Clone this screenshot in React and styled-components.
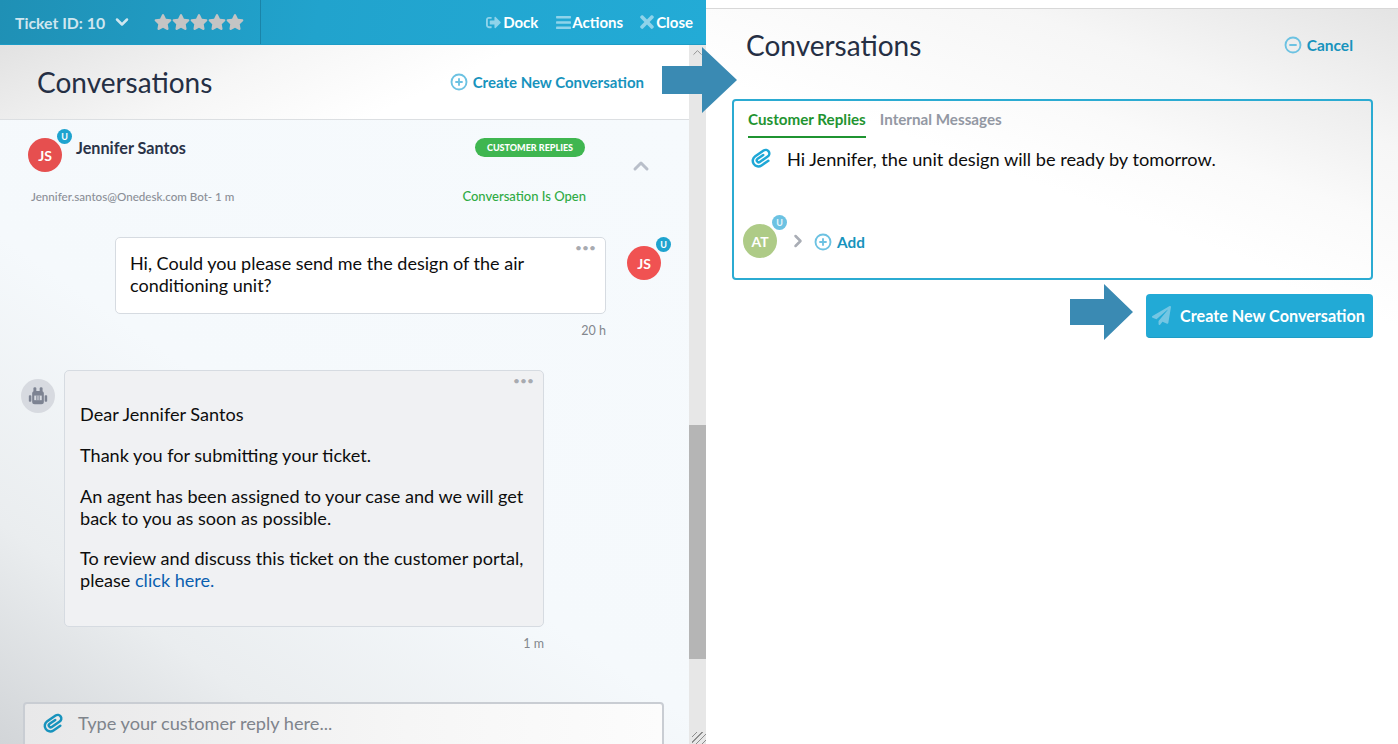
import React from 'react'
import styled, { createGlobalStyle } from 'styled-components'
import { ChevronDown, ChevronUp, ChevronRight, CirclePlus, CircleMinus } from 'lucide-react'
import { FaStar, FaBars, FaTimes, FaPaperPlane, FaSignOutAlt } from 'react-icons/fa'

const GlobalStyle = createGlobalStyle`
  html, body {
    margin: 0;
    padding: 0;
    background: #fff;
    font-family: Lato, "Liberation Sans", sans-serif;
  }
  * { box-sizing: border-box; }
`

function Clip({ size = 22 }) {
  return (
    <svg width={size} height={size} viewBox="0 0 24 24" fill="none" stroke="currentColor" strokeWidth="2.7" strokeLinecap="round">
      <path transform="rotate(-34 12 12)" d="M15 10H7.6a2.1 2.1 0 0 0 0 4.2H18a4 4 0 0 0 0-8H7a6.1 6.1 0 0 0 0 12.2H16" />
    </svg>
  )
}

function Robot() {
  return (
    <svg width="20" height="20" viewBox="0 0 24 24" fill="#7d8392">
      <rect x="6.5" y="1.5" width="3.5" height="6" rx="1.5" />
      <rect x="14" y="1.5" width="3.5" height="6" rx="1.5" />
      <rect x="5" y="6" width="14" height="16" rx="3" />
      <rect x="1" y="11" width="3" height="8" rx="1" />
      <rect x="20" y="11" width="3" height="8" rx="1" />
      <path d="M7.5 11.5h9v5.5h-9z" fill="#d7dae0" />
      <path d="M10 11.5h1.3V17H10zM12.7 11.5H14V17h-1.3z" />
    </svg>
  )
}

function Arrow({ shaft, headW, headH, shaftH }) {
  const w = shaft + headW
  const top = (headH - shaftH) / 2
  return (
    <svg width={w} height={headH} viewBox={`0 0 ${w} ${headH}`}>
      <path
        d={`M0 ${top}H${shaft}V0L${w} ${headH / 2}L${shaft} ${headH}V${top + shaftH}H0Z`}
        fill="#3a8ab3"
      />
    </svg>
  )
}

export default function App() {
  return (
    <>
      <GlobalStyle />
      <Page>
        <LeftPanel>
          <TopBar>
            <TicketCell>
              <TicketLabel>Ticket ID: 10</TicketLabel>
              <ChevronDown size={20} strokeWidth={3} color="#cfe6ef" />
              <Stars>
                {[0, 1, 2, 3, 4].map((i) => <FaStar key={i} size={18} />)}
              </Stars>
            </TicketCell>
            <BarActions>
              <BarAction><DockIcon size={15} /><span>Dock</span></BarAction>
              <BarAction><FaBars size={17} /><span>Actions</span></BarAction>
              <BarAction><CloseIcon size={20} /><span>Close</span></BarAction>
            </BarActions>
          </TopBar>

          <LeftBody>
            <Main>
              <LeftHead>
                <Title>Conversations</Title>
                <CreateLink>
                  <CirclePlus size={18} color="#6cc2e2" strokeWidth={2.5} />
                  <span>Create New Conversation</span>
                </CreateLink>
              </LeftHead>

              <Messages>
                <ThreadHead>
                  <NameRow>
                    <Avatar $bg="#e64f4f">
                      JS
                      <Badge>U</Badge>
                    </Avatar>
                    <Name>Jennifer Santos</Name>
                    <Pill>CUSTOMER REPLIES</Pill>
                    <Collapse><ChevronUp size={24} strokeWidth={3} /></Collapse>
                  </NameRow>
                  <MetaRow>
                    <Email>Jennifer.santos@Onedesk.com Bot- 1 m</Email>
                    <OpenState>Conversation Is Open</OpenState>
                  </MetaRow>
                </ThreadHead>

                <CustomerRow>
                  <Bubble>
                    <Dots>•••</Dots>
                    Hi, Could you please send me the design of the air conditioning unit?
                  </Bubble>
                  <SideAvatar $bg="#f05252">
                    JS
                    <Badge>U</Badge>
                  </SideAvatar>
                </CustomerRow>
                <CustomerTime>20 h</CustomerTime>

                <BotRow>
                  <BotAvatar><Robot /></BotAvatar>
                  <BotBubble>
                    <Dots>•••</Dots>
                    <Para>Dear Jennifer Santos</Para>
                    <Para>Thank you for submitting your ticket.</Para>
                    <Para>An agent has been assigned to your case and we will get back to you as soon as possible.</Para>
                    <Para>To review and discuss this ticket on the customer portal, please <BubbleLink>click here.</BubbleLink></Para>
                  </BotBubble>
                </BotRow>
                <BotTime>1 m</BotTime>

                <ReplyBox>
                  <ReplyClip><Clip size={22} /></ReplyClip>
                  <ReplyHint>Type your customer reply here...</ReplyHint>
                </ReplyBox>
              </Messages>
            </Main>
            <ScrollTrack>
              <ScrollUp><ChevronUp size={15} strokeWidth={1.5} /></ScrollUp>
              <ScrollThumb />
              <Grip />
            </ScrollTrack>
          </LeftBody>
        </LeftPanel>

        <RightPanel>
          <RightHead>
            <RightTitle>Conversations</RightTitle>
            <CancelLink>
              <CircleMinus size={18} color="#6cc2e2" strokeWidth={2.5} />
              <span>Cancel</span>
            </CancelLink>
          </RightHead>

          <Composer>
            <Tabs>
              <Tab $active>Customer Replies</Tab>
              <Tab>Internal Messages</Tab>
            </Tabs>
            <DraftRow>
              <DraftClip><Clip size={22} /></DraftClip>
              <DraftText>Hi Jennifer, the unit design will be ready by tomorrow.</DraftText>
            </DraftRow>
            <AssigneeRow>
              <Avatar $bg="#aecb87">
                AT
                <Badge $light>U</Badge>
              </Avatar>
              <ChevronRight size={20} strokeWidth={3} color="#a9adb5" />
              <AddLink>
                <CirclePlus size={18} color="#6cc2e2" strokeWidth={2.5} />
                <span>Add</span>
              </AddLink>
            </AssigneeRow>
          </Composer>

          <SubmitRow>
            <SubmitArrow>
              <Arrow shaft={34} headW={29} headH={56} shaftH={26} />
            </SubmitArrow>
            <SubmitButton>
              <FaPaperPlane size={19} color="#74c6e3" />
              <span>Create New Conversation</span>
            </SubmitButton>
          </SubmitRow>
        </RightPanel>

        <HeadArrow>
          <Arrow shaft={40} headW={35} headH={66} shaftH={28} />
        </HeadArrow>
      </Page>
    </>
  )
}

const Page = styled.div`
  position: relative;
  display: flex;
  width: 1398px;
  height: 744px;
  overflow: hidden;
  background: #fff;
`

const LeftPanel = styled.div`
  display: flex;
  flex-direction: column;
  width: 706px;
  height: 744px;
`

const TopBar = styled.div`
  display: flex;
  align-items: center;
  justify-content: space-between;
  height: 45px;
  flex-shrink: 0;
  padding-right: 13px;
  background: linear-gradient(100deg, #1f90b5 0%, #21a3cd 45%, #23abd6 100%);
  border-bottom: 1px solid #1d9cc6;
`

const TicketCell = styled.div`
  display: flex;
  align-items: center;
  width: 261px;
  height: 100%;
  padding-left: 15px;
  border-right: 1px solid #1a84a8;
  color: #cfe6ef;
`

const TicketLabel = styled.span`
  font-size: 15.8px;
  font-weight: 700;
  margin-right: 7px;
  white-space: nowrap;
`

const Stars = styled.div`
  display: flex;
  margin-left: 22px;
  color: #c4c4c4;
`

const BarActions = styled.div`
  display: flex;
  align-items: center;
  gap: 17px;
`

const BarAction = styled.div`
  display: flex;
  align-items: center;
  color: #fff;
  font-size: 15px;
  font-weight: 700;

  svg { color: #8fd3ea; }
`

const DockIcon = styled(FaSignOutAlt)`
  margin-right: 2px;
`

const CloseIcon = styled(FaTimes)`
  margin: 0 -1px 0 -3px;
`

const LeftBody = styled.div`
  flex: 1;
  display: flex;
  min-height: 0;
`

const Main = styled.div`
  flex: 1;
  display: flex;
  flex-direction: column;
  min-width: 0;
`

const LeftHead = styled.div`
  display: flex;
  align-items: center;
  justify-content: space-between;
  height: 75px;
  flex-shrink: 0;
  padding: 0 45px 0 37px;
  background: linear-gradient(155deg, #e2e2e2 0%, #f6f6f6 35%, #fff 62%);
  border-bottom: 1px solid #dcdfe2;
`

const Title = styled.h1`
  margin: 0;
  font-size: 28px;
  font-weight: 400;
  color: #252f44;
`

const CreateLink = styled.div`
  display: flex;
  align-items: center;
  gap: 5px;
  color: #1793bd;
  font-size: 15px;
  font-weight: 700;
`

const Messages = styled.div`
  flex: 1;
  position: relative;
  min-height: 0;
  overflow: hidden;
  background: linear-gradient(35deg, #d2d5d8 0%, #eaedef 20%, #f5f9fc 46%, #f6fafd 100%);
`

const ThreadHead = styled.div`
  display: flex;
  flex-direction: column;
  padding: 18px 0 0 28px;
`

const NameRow = styled.div`
  display: flex;
  align-items: flex-start;
  height: 35px;
`

const Name = styled.div`
  margin: 0 0 0 14px;
  width: 399px;
  font-size: 16.2px;
  font-weight: 700;
  color: #2a3348;
`

const Pill = styled.div`
  display: flex;
  align-items: center;
  justify-content: center;
  width: 110px;
  height: 19px;
  border-radius: 10px;
  background: #3fb650;
  color: #fff;
  font-size: 9px;
  font-weight: 900;
`

const Collapse = styled.div`
  display: flex;
  margin: 16px 0 0 44px;
  color: #b9bfca;
`

const MetaRow = styled.div`
  display: flex;
  align-items: center;
  justify-content: space-between;
  width: 558px;
  margin-top: 15px;
  padding-left: 3px;
`

const Email = styled.div`
  font-size: 11.6px;
  font-weight: 500;
  color: #8b8f97;
`

const OpenState = styled.div`
  font-size: 13px;
  font-weight: 500;
  color: #2fab44;
`

const CustomerRow = styled.div`
  display: flex;
  align-items: flex-start;
  gap: 21px;
  margin: 33px 0 0 115px;
`

const Bubble = styled.div`
  position: relative;
  width: 491px;
  height: 77px;
  padding: 14px 14px;
  background: #fff;
  border: 1px solid #d6dbe1;
  border-radius: 5px;
  font-size: 18px;
  line-height: 22px;
  color: #0d0d0d;
`

const Dots = styled.div`
  position: absolute;
  top: 4px;
  right: 9px;
  font-size: 12px;
  line-height: 12px;
  color: #a8abb0;
`

const CustomerTime = styled.div`
  width: 606px;
  margin-top: 9px;
  text-align: right;
  font-size: 12.5px;
  color: #83878d;
`

const BotRow = styled.div`
  display: flex;
  align-items: flex-start;
  gap: 9px;
  margin: 32px 0 0 21px;
`

const BotAvatar = styled.div`
  display: flex;
  align-items: center;
  justify-content: center;
  width: 34px;
  height: 34px;
  margin-top: 9px;
  border-radius: 50%;
  background: #d7dae0;
`

const BotBubble = styled.div`
  position: relative;
  width: 480px;
  height: 257px;
  padding: 32px 15px 0;
  background: #f0f1f3;
  border: 1px solid #d6dbe1;
  border-radius: 5px;
  font-size: 18.1px;
  line-height: 22px;
  color: #0d0d0d;
`

const Para = styled.p`
  margin: 0 0 19px;

  &:last-child { margin-top: -1px; }
`

const BubbleLink = styled.span`
  color: #0b5fb0;
`

const BotTime = styled.div`
  width: 544px;
  margin-top: 9px;
  text-align: right;
  font-size: 12.5px;
  color: #83878d;
`

const ReplyBox = styled.div`
  position: absolute;
  left: 23px;
  top: 582px;
  display: flex;
  align-items: flex-start;
  width: 641px;
  height: 60px;
  padding: 8px 0 0 18px;
  background: linear-gradient(90deg, #e8e8e9, #f6f6f6 60%, #fcfcfc);
  border: 2px solid #c9cdd3;
  border-radius: 4px;
`

const ReplyClip = styled.div`
  display: flex;
  color: #1793bd;
`

const ReplyHint = styled.div`
  margin-left: 13px;
  font-size: 18.2px;
  line-height: 22px;
  color: #7f848c;
`

const ScrollTrack = styled.div`
  position: relative;
  width: 17px;
  background: #e7e7e7;
  flex-shrink: 0;
`

const ScrollUp = styled.div`
  display: flex;
  justify-content: center;
  color: #8f8f8f;
`

const ScrollThumb = styled.div`
  position: absolute;
  left: 0;
  right: 0;
  top: 380px;
  height: 234px;
  background: #b5b5b5;
`

const Grip = styled.div`
  position: absolute;
  right: 0;
  bottom: 0;
  width: 14px;
  height: 12px;
  background: repeating-linear-gradient(135deg, transparent 0 3px, #8d8d8d 3px 4px);
`

const RightPanel = styled.div`
  flex: 1;
  display: flex;
  flex-direction: column;
  height: 744px;
  margin-top: 8px;
  padding: 0 25px 0 26px;
  border-top: 1px solid #d8d8d8;
  background: linear-gradient(200deg, #e4e4e4 0%, #f6f6f6 14%, #fff 32%);
`

const RightHead = styled.div`
  display: flex;
  align-items: center;
  justify-content: space-between;
  height: 74px;
  padding: 0 20px 2px 14px;
`

const RightTitle = styled(Title)``

const CancelLink = styled(CreateLink)`
  gap: 5px;
  font-size: 15.5px;
`

const Composer = styled.div`
  display: flex;
  flex-direction: column;
  width: 641px;
  height: 181px;
  margin-top: 16px;
  padding: 0 14px 0 10px;
  background: linear-gradient(200deg, #ececec 0%, #fafafa 28%, #fff 50%);
  border: 2px solid #2babd2;
  border-radius: 4px;
`

const Tabs = styled.div`
  display: flex;
  gap: 14px;
  padding-left: 4px;
  height: 37px;
`

const Tab = styled.div`
  padding-top: 9px;
  font-size: 15.2px;
  font-weight: 700;
  color: ${(p) => (p.$active ? '#1f9431' : '#9398a3')};
  border-bottom: ${(p) => (p.$active ? '2px solid #1f9431' : '0')};
`

const DraftRow = styled.div`
  display: flex;
  align-items: flex-start;
  margin-top: 9px;
  padding-left: 7px;
`

const DraftClip = styled.div`
  display: flex;
  color: #1ea7d6;
`

const DraftText = styled.div`
  margin-left: 14px;
  font-size: 18.2px;
  line-height: 24px;
  color: #0d0d0d;
`

const AssigneeRow = styled.div`
  display: flex;
  align-items: center;
  gap: 11px;
  margin-top: 53px;
  margin-left: -1px;
`

const AddLink = styled.div`
  display: flex;
  align-items: center;
  gap: 5px;
  margin: 1px 0 0 -5px;
  color: #1793bd;
  font-size: 15.3px;
  font-weight: 700;
`

const SubmitRow = styled.div`
  display: flex;
  align-items: flex-start;
  justify-content: flex-end;
  gap: 13px;
  width: 641px;
  margin-top: 14px;
`

const SubmitArrow = styled.div`
  display: flex;
  margin-top: -10px;
`

const SubmitButton = styled.div`
  display: flex;
  align-items: center;
  gap: 9px;
  width: 227px;
  height: 44px;
  padding-left: 6px;
  background: #22aad6;
  border-bottom: 1px solid #1f9cc5;
  border-radius: 4px;
  color: #fff;
  font-size: 16.2px;
  font-weight: 700;
  white-space: nowrap;
`

const Avatar = styled.div`
  position: relative;
  display: flex;
  align-items: center;
  justify-content: center;
  flex-shrink: 0;
  width: 34px;
  height: 34px;
  border-radius: 50%;
  background: ${(p) => p.$bg};
  color: #fff;
  font-size: 14px;
  font-weight: 700;
`

const SideAvatar = styled(Avatar)`
  margin-top: 9px;
`

const Badge = styled.span`
  position: absolute;
  top: -9px;
  right: -10px;
  display: flex;
  align-items: center;
  justify-content: center;
  width: 15px;
  height: 15px;
  border-radius: 50%;
  background: ${(p) => (p.$light ? '#6cc2e2' : '#1ea3cf')};
  color: ${(p) => (p.$light ? '#e8f6fb' : '#fff')};
  font-size: 9px;
  font-weight: 700;
`

const HeadArrow = styled.div`
  position: absolute;
  left: 662px;
  top: 47px;
  display: flex;
`
